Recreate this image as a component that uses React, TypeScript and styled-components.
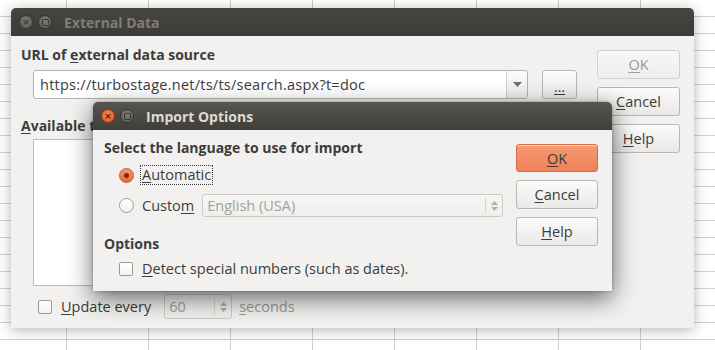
import React from "react";
import styled, { createGlobalStyle, css } from "styled-components";

const Global = createGlobalStyle`
  html, body { margin: 0; padding: 0; }
  body {
    width: 715px; height: 350px; overflow: hidden;
    font-family: "Open Sans", "DejaVu Sans", sans-serif;
    font-size: 14px; color: #3c3c3c;
    background-color: #ffffff;
    background-image:
      linear-gradient(to right, #cfcfcf 1px, transparent 1px),
      linear-gradient(to bottom, #cfcfcf 1px, transparent 1px);
    background-size: 82px 100%, 100% 17px;
    background-position: 66px 0, 0 16px;
  }
`;

const Desktop = styled.div`
  position: relative;
  width: 715px;
  height: 350px;
`;

const Window = styled.div<{ $x: number; $y: number; $w: number; $h: number; $active?: boolean }>`
  position: absolute;
  left: ${(p) => p.$x}px;
  top: ${(p) => p.$y}px;
  width: ${(p) => p.$w}px;
  height: ${(p) => p.$h}px;
  display: flex;
  flex-direction: column;
  background: #f2f1f0;
  border-radius: 5px 5px 0 0;
  box-shadow: ${(p) =>
    p.$active
      ? "0 7px 24px rgba(0,0,0,0.6), 0 0 3px rgba(0,0,0,0.3)"
      : "0 2px 14px rgba(0,0,0,0.3)"};
`;

const TitleBar = styled.div<{ $active?: boolean }>`
  height: 28px;
  flex: none;
  display: flex;
  align-items: center;
  padding-left: 8px;
  border-radius: 5px 5px 0 0;
  background: ${(p) =>
    p.$active ? "linear-gradient(#57554f, #3f3e3a)" : "linear-gradient(#46453f, #3c3b37)"};
`;

const CircleBtn = styled.div<{ $kind: "close" | "min"; $active?: boolean }>`
  width: 14px;
  height: 14px;
  border-radius: 50%;
  margin-right: 5px;
  display: flex;
  align-items: center;
  justify-content: center;
  box-sizing: border-box;
  ${(p) =>
    p.$kind === "close" && p.$active
      ? css`
          background: radial-gradient(circle at 50% 35%, #f58a5c, #e0501c);
          border: 1px solid #9b3a17;
        `
      : css`
          background: radial-gradient(circle at 50% 35%, #7a7974, #5c5b56);
          border: 1px solid #35342f;
        `}
`;

const CloseGlyph = styled.span<{ $active?: boolean }>`
  font-family: "DejaVu Sans", sans-serif;
  font-size: 9px;
  line-height: 1;
  font-weight: bold;
  color: ${(p) => (p.$active ? "#5a2008" : "#3b3a36")};
`;

const MinGlyph = styled.span`
  width: 5px;
  height: 5px;
  border: 1px solid #3b3a36;
  border-radius: 1px;
`;

const Title = styled.span<{ $active?: boolean }>`
  margin-left: 7px;
  font-weight: bold;
  font-size: 14px;
  color: ${(p) => (p.$active ? "#dfdbd2" : "#807d76")};
`;

const Body = styled.div<{ $pad: string }>`
  flex: 1;
  display: flex;
  padding: ${(p) => p.$pad};
`;

const Main = styled.div`
  flex: 1;
  display: flex;
  flex-direction: column;
`;

const ButtonCol = styled.div<{ $top: number; $w: number }>`
  display: flex;
  flex-direction: column;
  gap: 8px;
  padding-top: ${(p) => p.$top}px;
  width: ${(p) => p.$w}px;
`;

const Button = styled.div<{ $primary?: boolean; $disabled?: boolean; $w?: number; $h?: number }>`
  box-sizing: border-box;
  height: ${(p) => p.$h ?? 29}px;
  width: ${(p) => (p.$w ? `${p.$w}px` : "auto")};
  border-radius: 3px;
  display: flex;
  align-items: center;
  justify-content: center;
  font-size: 14.5px;
  border: 1px solid ${(p) => (p.$primary ? "#d46e45" : p.$disabled ? "#d2d0cb" : "#b9b7b1")};
  background: ${(p) =>
    p.$primary
      ? "linear-gradient(#f69a74, #ef8157)"
      : p.$disabled
      ? "linear-gradient(#f7f7f6, #efeeed)"
      : "linear-gradient(#fbfbfa, #eae9e7)"};
  color: ${(p) => (p.$disabled ? "#9c9a95" : "#3c3c3c")};
  box-shadow: ${(p) => (p.$disabled ? "none" : "0 1px 0 rgba(255,255,255,0.6) inset")};
`;

const Mn = styled.span`
  text-decoration: underline;
  text-underline-offset: 2px;
`;

const Heading = styled.div<{ $mt?: number }>`
  font-weight: bold;
  font-size: 14px;
  line-height: 17px;
  margin-top: ${(p) => p.$mt ?? 0}px;
`;

const Row = styled.div<{ $mt?: number; $ml?: number; $gap?: number }>`
  display: flex;
  align-items: center;
  margin-top: ${(p) => p.$mt ?? 0}px;
  margin-left: ${(p) => p.$ml ?? 0}px;
  gap: ${(p) => p.$gap ?? 0}px;
`;

const Combo = styled.div`
  box-sizing: border-box;
  width: 495px;
  height: 29px;
  display: flex;
  border: 1px solid #b5b3ad;
  border-radius: 3px;
  background: #fff;
`;

const ComboText = styled.div`
  flex: 1;
  padding-left: 6px;
  display: flex;
  align-items: center;
  font-size: 14.5px;
  letter-spacing: 0.25px;
  color: #3c3c3c;
`;

const ComboArrow = styled.div`
  width: 20px;
  border-left: 1px solid #cfcdc8;
  background: linear-gradient(#fbfbfa, #ecebe9);
  display: flex;
  align-items: center;
  justify-content: center;
  border-radius: 0 3px 3px 0;
`;

const ListBox = styled.div`
  box-sizing: border-box;
  width: 544px;
  height: 147px;
  margin-left: 12px;
  margin-top: 5px;
  background: #fff;
  border: 1px solid #bdbbb5;
`;

const CheckBox = styled.div`
  box-sizing: border-box;
  width: 14px;
  height: 14px;
  border: 1px solid #9d9b96;
  border-radius: 2px;
  background: linear-gradient(#ffffff, #f3f3f2);
`;

const Radio = styled.div<{ $checked?: boolean }>`
  box-sizing: border-box;
  width: 15px;
  height: 15px;
  border-radius: 50%;
  display: flex;
  align-items: center;
  justify-content: center;
  ${(p) =>
    p.$checked
      ? css`
          background: linear-gradient(#f5966e, #e9693b);
          border: 1px solid #c45a32;
        `
      : css`
          background: linear-gradient(#ffffff, #f2f2f1);
          border: 1px solid #9d9b96;
        `}
`;

const RadioDot = styled.div`
  width: 5px;
  height: 5px;
  border-radius: 50%;
  background: #7a2c10;
`;

const Label = styled.span<{ $ml?: number; $focus?: boolean; $color?: string }>`
  font-size: 14.5px;
  line-height: 18px;
  margin-left: ${(p) => p.$ml ?? 0}px;
  color: ${(p) => p.$color ?? "#3c3c3c"};
  ${(p) =>
    p.$focus &&
    css`
      outline: 1px dotted #3c3c3c;
      outline-offset: 0px;
      padding: 0 1px;
      margin-left: ${(p.$ml ?? 0) - 1}px;
    `}
`;

const Spin = styled.div<{ $w: number; $h: number; $ml: number }>`
  box-sizing: border-box;
  width: ${(p) => p.$w}px;
  height: ${(p) => p.$h}px;
  margin-left: ${(p) => p.$ml}px;
  display: flex;
  border: 1px solid #cdcbc6;
  border-radius: 3px;
  background: linear-gradient(#f6f6f5, #efeeed);
`;

const SpinText = styled.div`
  flex: 1;
  display: flex;
  align-items: center;
  padding-left: 4px;
  font-size: 14.5px;
  color: #a3a19c;
`;

const SpinArrows = styled.div`
  width: 16px;
  display: flex;
  flex-direction: column;
  align-items: center;
  justify-content: center;
  gap: 2px;
  border-left: 1px solid #d8d6d1;
  margin: 3px 0;
`;

const Tri = ({ up, color = "#b1afaa", size = 3 }: { up?: boolean; color?: string; size?: number }) => (
  <svg width={size * 2 + 1} height={size + 1} viewBox={`0 0 ${size * 2 + 1} ${size + 1}`}>
    <polygon
      points={
        up
          ? `0,${size + 1} ${size + 0.5},0 ${size * 2 + 1},${size + 1}`
          : `0,0 ${size * 2 + 1},0 ${size + 0.5},${size + 1}`
      }
      fill={color}
    />
  </svg>
);

const Dots = styled.span`
  font-size: 14px;
  margin-top: 4px;
  text-decoration: underline;
  text-underline-offset: 2px;
`;

function TitleButtons({ active }: { active?: boolean }) {
  return (
    <>
      <CircleBtn $kind="close" $active={active}>
        <CloseGlyph $active={active}>×</CloseGlyph>
      </CircleBtn>
      <CircleBtn $kind="min" $active={active}>
        <MinGlyph />
      </CircleBtn>
    </>
  );
}

export default function App() {
  return (
    <>
      <Global />
      <Desktop>
        <Window $x={11} $y={8} $w={683} $h={320}>
          <TitleBar>
            <TitleButtons />
            <Title>External Data</Title>
          </TitleBar>
          <Body $pad="10px 14px 0 10px">
            <Main>
              <Heading>
                URL of <Mn>e</Mn>xternal data source
              </Heading>
              <Row $mt={7} $ml={12} $gap={14}>
                <Combo>
                  <ComboText>https://turbostage.net/ts/ts/search.aspx?t=doc</ComboText>
                  <ComboArrow>
                    <Tri color="#6f6e69" size={4} />
                  </ComboArrow>
                </Combo>
                <Button $w={35}>
                  <Dots>...</Dots>
                </Button>
              </Row>
              <Heading $mt={18}>
                <Mn>A</Mn>vailable tables/ranges
              </Heading>
              <ListBox />
              <Row $mt={8} $ml={17}>
                <CheckBox />
                <Label $ml={9}>
                  <Mn>U</Mn>pdate every
                </Label>
                <Spin $w={68} $h={25} $ml={13}>
                  <SpinText>60</SpinText>
                  <SpinArrows>
                    <Tri up />
                    <Tri />
                  </SpinArrows>
                </Spin>
                <Label $ml={7} $color="#9a9893">
                  <Mn>s</Mn>econds
                </Label>
              </Row>
            </Main>
            <ButtonCol $top={4} $w={83}>
              <Button $disabled>
                <Mn>O</Mn>K
              </Button>
              <Button>
                <Mn>C</Mn>ancel
              </Button>
              <Button>
                <Mn>H</Mn>elp
              </Button>
            </ButtonCol>
          </Body>
        </Window>

        <Window $x={93} $y={102} $w={519} $h={189} $active>
          <TitleBar $active>
            <TitleButtons active />
            <Title $active>Import Options</Title>
          </TitleBar>
          <Body $pad="9px 14px 0 11px">
            <Main>
              <Heading>Select the language to use for import</Heading>
              <Row $mt={10} $ml={15}>
                <Radio $checked>
                  <RadioDot />
                </Radio>
                <Label $ml={8} $focus>
                  <Mn>A</Mn>utomatic
                </Label>
              </Row>
              <Row $mt={10} $ml={15}>
                <Radio />
                <Label $ml={8}>
                  Custo<Mn>m</Mn>
                </Label>
                <Spin $w={301} $h={23} $ml={8}>
                  <SpinText>English (USA)</SpinText>
                  <SpinArrows>
                    <Tri up />
                    <Tri />
                  </SpinArrows>
                </Spin>
              </Row>
              <Heading $mt={18}>Options</Heading>
              <Row $mt={8} $ml={15}>
                <CheckBox />
                <Label $ml={9}>
                  <Mn>D</Mn>etect special numbers (such as dates).
                </Label>
              </Row>
            </Main>
            <ButtonCol $top={5} $w={82}>
              <Button $primary $h={28}>
                <Mn>O</Mn>K
              </Button>
              <Button>
                <Mn>C</Mn>ancel
              </Button>
              <Button>
                <Mn>H</Mn>elp
              </Button>
            </ButtonCol>
          </Body>
        </Window>
      </Desktop>
    </>
  );
}
